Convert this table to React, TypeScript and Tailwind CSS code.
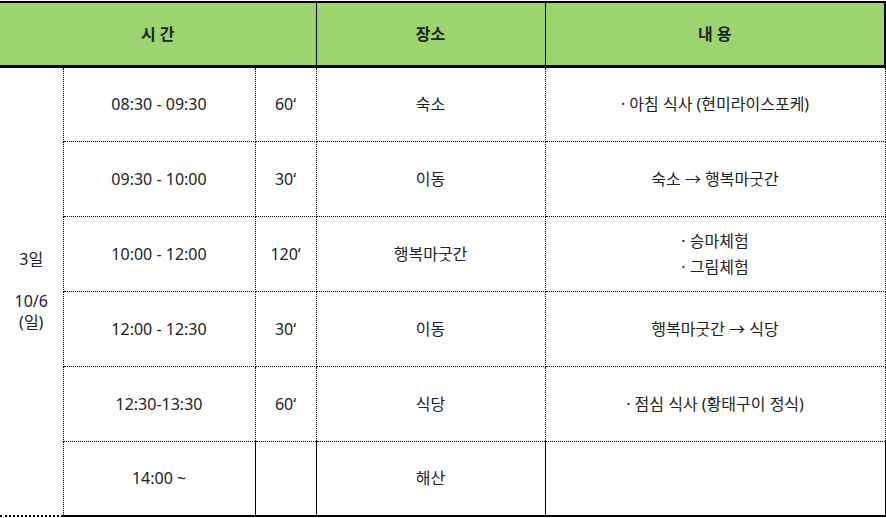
// 일정표: 3일차 (10/6) 시간 · 장소 · 내용

const rows = [
  { time: '08:30 - 09:30', dur: '60‘', place: '숙소', content: ['· 아침 식사 (현미라이스포케)'] },
  { time: '09:30 - 10:00', dur: '30‘', place: '이동', content: ['숙소 → 행복마굿간'] },
  { time: '10:00 - 12:00', dur: '120‘', place: '행복마굿간', content: ['· 승마체험', '· 그림체험'] },
  { time: '12:00 - 12:30', dur: '30‘', place: '이동', content: ['행복마굿간 → 식당'] },
  { time: '12:30-13:30', dur: '60‘', place: '식당', content: ['· 점심 식사 (황태구이 정식)'] },
  { time: '14:00 ~', dur: '', place: '해산', content: [] },
];

export default function App() {
  return (
    <div
      className="w-[886px] bg-white pt-px text-[16px] text-[#222]"
      style={{ fontFamily: '"Noto Sans", "Noto Sans CJK KR", sans-serif' }}
    >
      <table className="w-[885px] table-fixed border-collapse">
        <colgroup>
          <col className="w-[63px]" />
          <col className="w-[192px]" />
          <col className="w-[61px]" />
          <col className="w-[229px]" />
          <col className="w-[340px]" />
        </colgroup>
        <thead>
          <tr className="h-[64px] bg-[#9cd46f]">
            <th
              colSpan={3}
              className="border-t-2 border-r border-b-[3px] border-t-black border-r-black border-b-black border-b-double text-[16px] font-semibold"
            >
              시 간
            </th>
            <th className="border-t-2 border-r border-b-[3px] border-t-black border-r-black border-b-black border-b-double text-[16px] font-semibold">
              장소
            </th>
            <th className="border-t-2 border-r-2 border-b-[3px] border-black border-b-double text-[16px] font-semibold">
              내 용
            </th>
          </tr>
        </thead>
        <tbody>
          {rows.map((r, i) => {
            const last = i === rows.length - 1;
            const bottom = last
              ? 'border-b-2 border-b-black border-solid'
              : 'border-b border-b-black border-dotted';
            return (
              <tr key={r.time} className="h-[75px]">
                {i === 0 && (
                  <td
                    rowSpan={rows.length}
                    className="border-r border-b-2 border-r-black border-b-black border-dotted text-center leading-[21px]"
                  >
                    3일
                    <br />
                    <br />
                    10/6
                    <br />
                    (일)
                  </td>
                )}
                <td className={`border-r border-r-black border-r-dotted text-center ${bottom}`}>{r.time}</td>
                <td className={`border-r border-r-black border-r-solid text-center ${bottom}`}>{r.dur}</td>
                <td className={`border-r border-r-black border-r-solid text-center ${bottom}`}>{r.place}</td>
                <td className={`border-r border-r-black border-r-solid text-center leading-[26px] ${bottom}`}>
                  {r.content.map((c) => (
                    <div key={c}>{c}</div>
                  ))}
                </td>
              </tr>
            );
          })}
        </tbody>
      </table>
    </div>
  );
}
